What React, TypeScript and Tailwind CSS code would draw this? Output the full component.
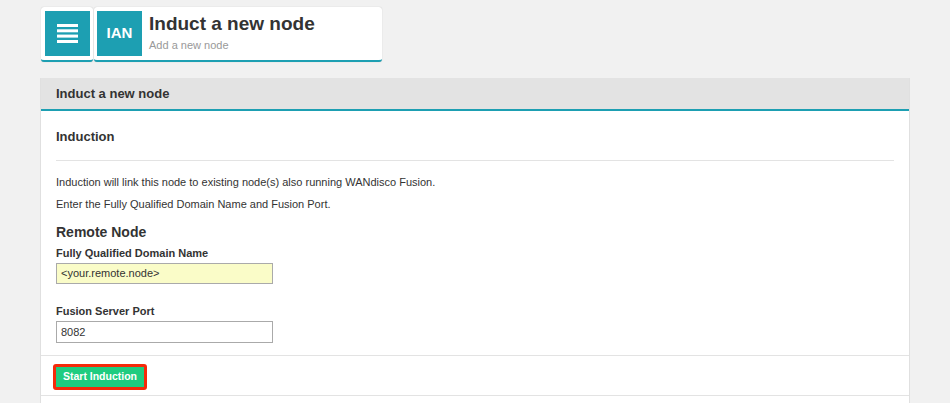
function MenuGlyph() {
  return (
    <svg width="21" height="19" viewBox="0 0 21 19" fill="#fff">
      <rect x="0" y="0" width="21" height="3" />
      <rect x="0" y="5.3" width="21" height="3" />
      <rect x="0" y="10.6" width="21" height="3" />
      <rect x="0" y="16" width="21" height="3" />
    </svg>
  );
}

export default function App() {
  return (
    <div className="min-h-[403px] bg-[#f1f1f1] font-['Liberation_Sans',Arial,sans-serif] text-[#333]">
      <div className="flex gap-[1px] pl-[41px] pt-[7px]">
        <div className="h-[55px] rounded-[3px] border-b-[2px] border-[#1d9fb2] bg-white pl-[4px] pr-[3px] pt-[4px] shadow-[0_0_1px_rgba(0,0,0,0.25)]">
          <div className="flex h-[45px] w-[45px] items-center justify-center bg-[#1d9fb2]">
            <MenuGlyph />
          </div>
        </div>
        <div className="flex h-[55px] w-[288px] gap-[7px] rounded-[3px] border-b-[2px] border-[#1d9fb2] bg-white pl-[3px] pt-[4px] shadow-[0_0_1px_rgba(0,0,0,0.25)]">
          <div className="flex h-[45px] w-[45px] items-center justify-center bg-[#1d9fb2] text-[15px] font-bold text-white">
            IAN
          </div>
          <div className="flex flex-col">
            <div className="mt-[2px] text-[19px] font-bold leading-[22px] text-[#333]">Induct a new node</div>
            <div className="mt-[4px] text-[11px] leading-[13px] text-[#999]">Add a new node</div>
          </div>
        </div>
      </div>

      <div className="mx-[40px] mt-[16px] border-x border-[#e0e0e0] bg-white">
        <div className="flex h-[33px] items-center border-b-[2px] border-[#1d9fb2] bg-[#e3e3e3] pl-[15px] text-[13px] font-bold">
          Induct a new node
        </div>
        <div className="border-b border-[#e3e3e3] px-[15px] pb-[12px] pt-[18px]">
          <h3 className="text-[13px] font-bold leading-[16px]">Induction</h3>
          <div className="mt-[15px] h-px bg-[#e3e3e3]" />
          <p className="mt-[13px] text-[11px] leading-[16px]">
            Induction will link this node to existing node(s) also running WANdisco Fusion.
          </p>
          <p className="mt-[6px] text-[11px] leading-[16px]">Enter the Fully Qualified Domain Name and Fusion Port.</p>
          <h4 className="mt-[12px] text-[14px] font-bold leading-[17px]">Remote Node</h4>
          <label className="mt-[5px] block text-[11px] font-bold leading-[14px]">Fully Qualified Domain Name</label>
          <div className="mt-[3px] flex h-[21px] w-[217px] items-center border border-[#aaa] bg-[#fafcc8] pl-[4px] text-[11px]">
            &lt;your.remote.node&gt;
          </div>
          <label className="mt-[20px] block text-[11px] font-bold leading-[14px]">Fusion Server Port</label>
          <div className="mt-[3px] flex h-[22px] w-[217px] items-center border border-[#aaa] bg-white pl-[4px] text-[11px]">
            8082
          </div>
        </div>
        <div className="border-b border-[#e3e3e3] pb-[5px] pl-[12px] pt-[7px]">
          <div className="inline-block rounded-[3px] border-[3px] border-[#f52a0a]">
            <div className="flex h-[20px] w-[88px] items-center justify-center bg-[#1fcc80] text-[10.5px] font-bold text-white">
              Start Induction
            </div>
          </div>
        </div>
        <div className="h-[8px]" />
      </div>
    </div>
  );
}
